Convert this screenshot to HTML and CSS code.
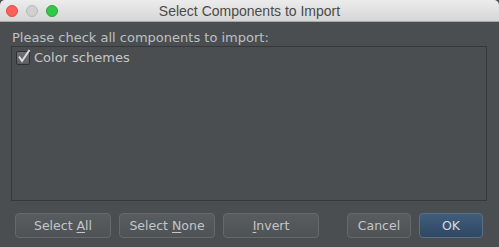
FILE: index.html
```html
<!DOCTYPE html>
<html>
<head>
	<title>Select Components to Import</title>
	<meta charset="UTF-8">
	<link rel="stylesheet" href="styles.css">
</head>
<body>
	<div class="window">
		<div class="titlebar">
			<div class="lights">
				<span class="light red"></span>
				<span class="light gray"></span>
				<span class="light green"></span>
			</div>
			<div class="title">Select Components to Import</div>
		</div>
		<div class="content">
			<div class="label">Please check all components to import:</div>
			<div class="list">
				<label class="item">
					<span class="check">
						<svg width="15" height="15" viewBox="0 0 15 15">
							<path d="M3 7.5 L6 12 L13.5 1" fill="none" stroke="#dcdcdc" stroke-width="2"/>
						</svg>
					</span>
					Color schemes
				</label>
			</div>
			<div class="buttons">
				<button class="btn wide">Select <u>A</u>ll</button>
				<button class="btn wide">Select <u>N</u>one</button>
				<button class="btn wide"><u>I</u>nvert</button>
				<div class="spacer"></div>
				<button class="btn">Cancel</button>
				<button class="btn ok">OK</button>
			</div>
		</div>
	</div>
</body>
</html>
```

FILE: styles.css
```css
html, body {
	margin: 0;
	padding: 0;
	height: 100%;
	background: #4b4e51;
}

.window {
	display: flex;
	flex-direction: column;
	height: 247px;
	width: 499px;
	font-family: "DejaVu Sans", sans-serif;
}

.titlebar {
	height: 21px;
	display: flex;
	align-items: center;
	position: relative;
	background: linear-gradient(#ececec, #d6d6d6);
	border-bottom: 1px solid #a9a9a9;
	border-radius: 5px 5px 0 0;
}

.lights {
	display: flex;
	gap: 8px;
	padding-left: 6px;
}

.light {
	width: 12px;
	height: 12px;
	border-radius: 50%;
	box-sizing: border-box;
}

.light.red {
	background: #fc605c;
	border: 1px solid #de4a46;
}

.light.gray {
	background: #d0d0d0;
	border: 1px solid #b9b9b9;
}

.light.green {
	background: #34c84a;
	border: 1px solid #24a836;
}

.title {
	position: absolute;
	left: 0;
	right: 0;
	text-align: center;
	font-family: "Liberation Sans", Arial, sans-serif;
	font-size: 14px;
	color: #4a4a4a;
}

.content {
	flex: 1;
	display: flex;
	flex-direction: column;
	padding: 8px 12px 9px 11px;
}

.label {
	font-size: 13px;
	color: #bcc0c4;
	line-height: 16px;
	margin-left: 1px;
}

.list {
	height: 155px;
	border: 1px solid #36393b;
	box-sizing: border-box;
	padding: 3px 4px;
}

.item {
	display: flex;
	align-items: center;
	gap: 4px;
	font-size: 13px;
	color: #c5c8ca;
}

.check {
	width: 14px;
	height: 14px;
	box-sizing: border-box;
	border: 1px solid #2e3032;
	background: linear-gradient(#6c7073, #5a5e61);
	border-radius: 2px;
	position: relative;
}

.check svg {
	position: absolute;
	left: -1px;
	top: -3px;
}

.buttons {
	display: flex;
	gap: 8px;
	margin-top: 12px;
	padding: 0 4px;
}

.spacer {
	flex: 1;
}

.btn {
	height: 25px;
	width: 64px;
	font-family: "DejaVu Sans", sans-serif;
	font-size: 12.5px;
	color: #c3c6c9;
	background: linear-gradient(#585c5f, #4f5356);
	border: 1px solid #66696c;
	border-radius: 4px;
	padding: 0;
}

.btn u {
	text-decoration-thickness: 1px;
	text-underline-offset: 2px;
}

.btn.wide {
	width: 96px;
}

.btn.ok {
	background: linear-gradient(#405d7b, #2f4762);
	border-color: #58708a;
	color: #d6dade;
}
```
